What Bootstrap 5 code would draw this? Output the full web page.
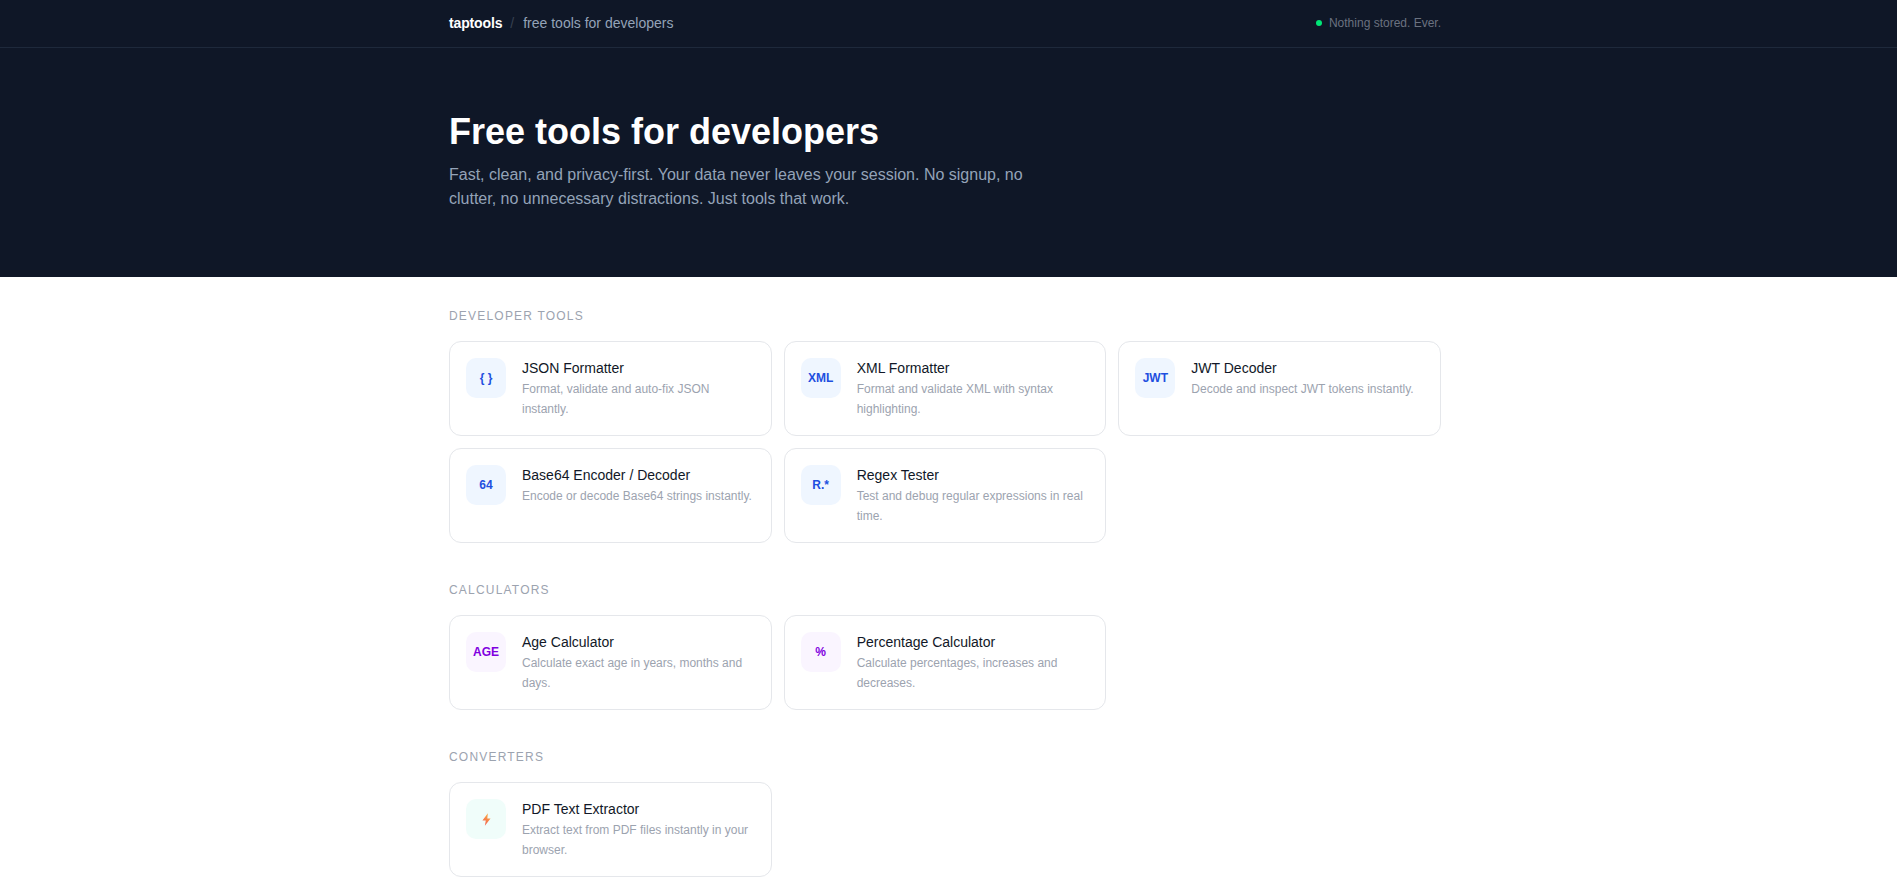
<!DOCTYPE html>
<html lang="en">
<head>
    <meta charset="UTF-8">
    <meta name="viewport" content="width=device-width, initial-scale=1.0">
    <title>taptools</title>
    <link href="https://cdn.jsdelivr.net/npm/bootstrap@5.3.0/dist/css/bootstrap.min.css" rel="stylesheet">
    <style>
        body {
            font-family: "Liberation Sans", Arial, sans-serif;
            background-color: #fff;
            color: #111827;
        }
        /* reference is centred on 1890px, not the full window */
        .full-band { padding-right: 7px; }
        .page-wrap {
            max-width: 1040px;
            margin: 0 auto;
            padding: 0 24px;
        }
        .top-bar {
            background-color: #0f1727;
            border-bottom: 1px solid #1e293b;
            height: 48px;
            padding-bottom: 1px;
        }
        .brand-name { color: #fff; font-size: 14px; font-weight: 700; letter-spacing: -0.01em; }
        .brand-sep { color: #374151; font-size: 14px; }
        .brand-tag { color: #94a3b8; font-size: 14px; margin-left: 1px; }
        .status-txt { color: #6b7280; font-size: 12px; }
        .status-dot { width: 6px; height: 6px; border-radius: 50%; background-color: #00e676; }
        .status-wrap { gap: 7px; }
        .hero-block {
            background-color: #0f1727;
            padding-top: 64px;
            padding-bottom: 66px;
        }
        .hero-title {
            color: #fff;
            font-size: 36px;
            font-weight: 700;
            line-height: 40px;
            margin-bottom: 11px;
        }
        .hero-sub {
            color: #94a3b8;
            font-size: 16px;
            line-height: 24px;
            max-width: 600px;
            margin: 0;
        }
        .tools-area { padding-top: 30px; }
        .group-label {
            color: #9ca3af;
            font-size: 12px;
            font-weight: 500;
            line-height: 18px;
            letter-spacing: 0.1em;
            text-transform: uppercase;
            margin-bottom: 16px;
        }
        .tool-group { margin-bottom: 38px; }
        .tool-grid {
            display: grid;
            grid-template-columns: repeat(3, 1fr);
            gap: 12px;
        }
        .tool-item {
            border: 1px solid #e5e7eb;
            border-radius: 12px;
            padding: 16px;
            text-decoration: none;
            background: #fff;
        }
        .tool-icon {
            width: 40px;
            height: 40px;
            flex-shrink: 0;
            border-radius: 10px;
            font-size: 12px;
            font-weight: 700;
        }
        .icon-blue { background-color: #eff6ff; color: #1e4fe0; }
        .icon-purple { background-color: #faf5ff; color: #8000e0; }
        .icon-green { background-color: #f0fdfa; }
        .tool-name { color: #111827; font-size: 14px; line-height: 20px; margin-bottom: 2px; }
        .tool-desc { color: #9ca3af; font-size: 12px; line-height: 19.5px; margin: 0; }
    </style>
</head>
<body>
    <div class="top-bar full-band">
        <div class="page-wrap h-100 d-flex align-items-center justify-content-between">
            <div class="d-flex align-items-center gap-2">
                <span class="brand-name">taptools</span>
                <span class="brand-sep">/</span>
                <span class="brand-tag">free tools for developers</span>
            </div>
            <div class="status-wrap d-flex align-items-center">
                <span class="status-dot"></span>
                <span class="status-txt">Nothing stored. Ever.</span>
            </div>
        </div>
    </div>

    <div class="hero-block full-band">
        <div class="page-wrap">
            <h1 class="hero-title">Free tools for developers</h1>
            <p class="hero-sub">Fast, clean, and privacy-first. Your data never leaves your session. No signup, no clutter, no unnecessary distractions. Just tools that work.</p>
        </div>
    </div>

    <div class="full-band">
        <div class="page-wrap tools-area">
            <div class="tool-group">
                <div class="group-label">Developer Tools</div>
                <div class="tool-grid">
                    <a class="tool-item d-flex gap-3" href="#">
                        <div class="tool-icon icon-blue d-flex align-items-center justify-content-center">{ }</div>
                        <div><div class="tool-name">JSON Formatter</div><p class="tool-desc">Format, validate and auto-fix JSON instantly.</p></div>
                    </a>
                    <a class="tool-item d-flex gap-3" href="#">
                        <div class="tool-icon icon-blue d-flex align-items-center justify-content-center">XML</div>
                        <div><div class="tool-name">XML Formatter</div><p class="tool-desc">Format and validate XML with syntax highlighting.</p></div>
                    </a>
                    <a class="tool-item d-flex gap-3" href="#">
                        <div class="tool-icon icon-blue d-flex align-items-center justify-content-center">JWT</div>
                        <div><div class="tool-name">JWT Decoder</div><p class="tool-desc">Decode and inspect JWT tokens instantly.</p></div>
                    </a>
                    <a class="tool-item d-flex gap-3" href="#">
                        <div class="tool-icon icon-blue d-flex align-items-center justify-content-center">64</div>
                        <div><div class="tool-name">Base64 Encoder / Decoder</div><p class="tool-desc">Encode or decode Base64 strings instantly.</p></div>
                    </a>
                    <a class="tool-item d-flex gap-3" href="#">
                        <div class="tool-icon icon-blue d-flex align-items-center justify-content-center">R.*</div>
                        <div><div class="tool-name">Regex Tester</div><p class="tool-desc">Test and debug regular expressions in real time.</p></div>
                    </a>
                </div>
            </div>

            <div class="tool-group">
                <div class="group-label">Calculators</div>
                <div class="tool-grid">
                    <a class="tool-item d-flex gap-3" href="#">
                        <div class="tool-icon icon-purple d-flex align-items-center justify-content-center">AGE</div>
                        <div><div class="tool-name">Age Calculator</div><p class="tool-desc">Calculate exact age in years, months and days.</p></div>
                    </a>
                    <a class="tool-item d-flex gap-3" href="#">
                        <div class="tool-icon icon-purple d-flex align-items-center justify-content-center">%</div>
                        <div><div class="tool-name">Percentage Calculator</div><p class="tool-desc">Calculate percentages, increases and decreases.</p></div>
                    </a>
                </div>
            </div>

            <div class="tool-group">
                <div class="group-label">Converters</div>
                <div class="tool-grid">
                    <a class="tool-item d-flex gap-3" href="#">
                        <div class="tool-icon icon-green d-flex align-items-center justify-content-center">
                            <svg width="9" height="13" viewBox="0 0 10 14"><defs><linearGradient id="bolt" x1="0.7" y1="0" x2="0.3" y2="1"><stop offset="0" stop-color="#fbb040"/><stop offset="1" stop-color="#f25c54"/></linearGradient></defs><path d="M6.5 0 .5 8h3.7L3.2 14 9.5 6H5.9z" fill="url(#bolt)"/></svg>
                        </div>
                        <div><div class="tool-name">PDF Text Extractor</div><p class="tool-desc">Extract text from PDF files instantly in your browser.</p></div>
                    </a>
                </div>
            </div>
        </div>
    </div>

    <script src="https://cdn.jsdelivr.net/npm/bootstrap@5.3.0/dist/js/bootstrap.bundle.min.js"></script>
</body>
</html>
